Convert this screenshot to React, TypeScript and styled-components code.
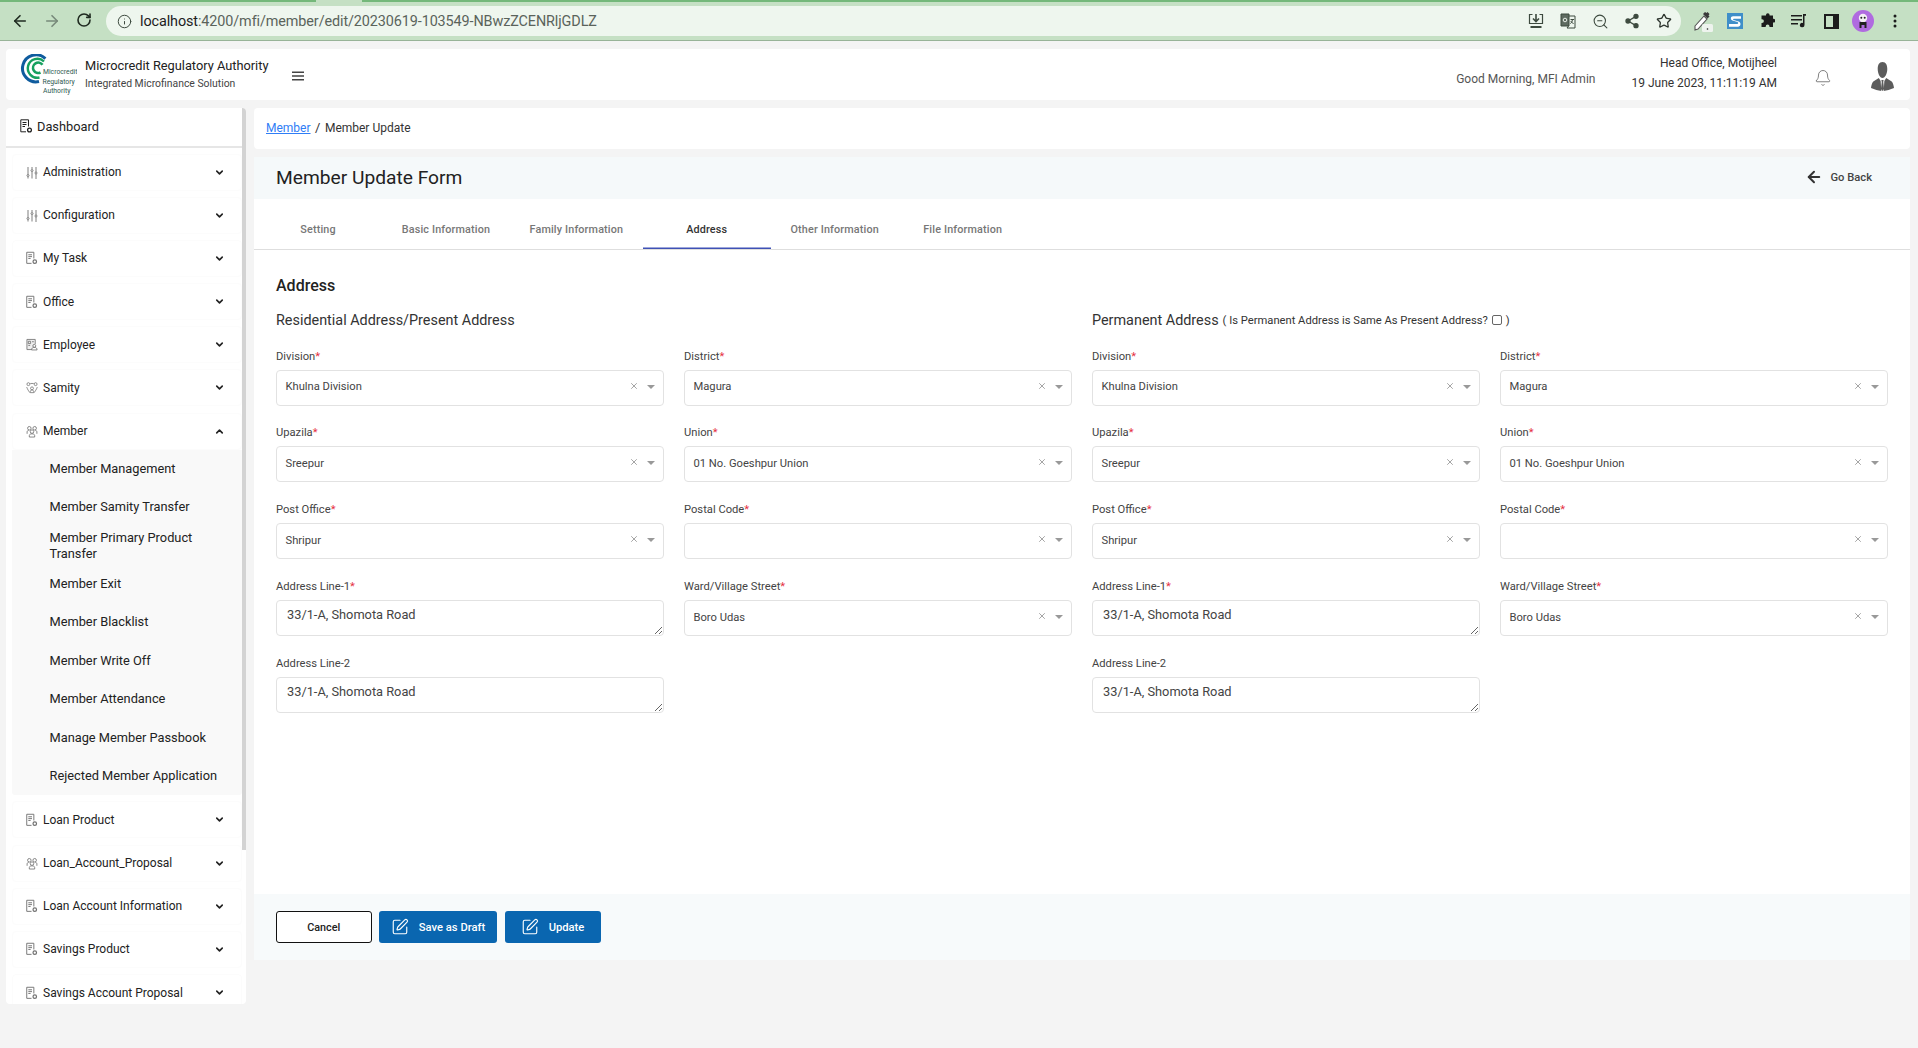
import React from "react";
import styled, { createGlobalStyle } from "styled-components";
import { ArrowLeft, ArrowRight, RotateCw, Info, ZoomOut, Share2, Star, SquarePen, Bell, ChevronDown, ChevronUp, X } from "lucide-react";

const Global = createGlobalStyle`
  html, body { margin: 0; padding: 0; background: #f4f4f4; height: 1048px; overflow: hidden; }
  * { box-sizing: border-box; }
  body { font-family: Roboto, "Liberation Sans", sans-serif; color: #222; }
`;

const TabStrip = styled.div`display: flex; height: 2px; background: #c5e0c4;`;
const TabSeg = styled.div<{ $w?: number }>`
  background: #74b87a; height: 2px;
  ${(p) => (p.$w ? `width: ${p.$w}px;` : "flex: 1;")}
  ${(p) => (p.$w ? "margin-right: 46px;" : "")}
`;
const Toolbar = styled.div`
  height: 39px; background: #c5e0c4; border-bottom: 1px solid #98b398;
  display: flex; align-items: center; padding: 0; color: #222;
`;
const NavBtn = styled.span<{ $dim?: boolean }>`
  width: 32px; display: flex; justify-content: center; color: ${(p) => (p.$dim ? "#77897a" : "#1f2a20")};
`;
const NavGroup = styled.div`display: flex; margin: 0 6px 0 4px;`;
const Omnibox = styled.div`
  width: 1575px; height: 30px; background: #eef6ee; border-radius: 15px;
  display: flex; align-items: center; padding: 0 1px 0 11px; font-size: 14.4px; color: #5a635b;
`;
const Url = styled.span`margin-left: 8px; flex: 1; letter-spacing: -0.1px;`;
const Host = styled.b`font-weight: 400; color: #1c211d;`;
const OmniIcon = styled.span`width: 32px; display: flex; justify-content: center; color: #3d4a3f;`;
const ExtGroup = styled.div`display: flex; margin-left: 6px;`;
const ExtIcon = styled.span`width: 32px; display: flex; justify-content: center; align-items: center; color: #1f1f1f;`;

const Page = styled.div`padding: 8px 8px 0 6px; display: flex; flex-direction: column; gap: 8px;`;
const Header = styled.header`
  height: 51px; background: #fff; border-radius: 4px; display: flex; align-items: center; padding: 0 16px 0 14px;
`;
const Brand = styled.div`margin-left: 8px; display: flex; flex-direction: column;`;
const BrandName = styled.div`font-size: 12.8px; line-height: 16px; color: #222; margin-top: -1px;`;
const BrandSub = styled.div`font-size: 10.4px; line-height: 13px; margin-top: 3px; color: #444;`;
const Burger = styled.span`margin-left: 24px; display: flex; color: #444; padding-top: 2px;`;
const Greeting = styled.div`margin-left: auto; font-size: 12px; color: #555; margin-right: 36px; padding-top: 8px;`;
const OfficeInfo = styled.div`text-align: right; font-size: 12px; color: #333; line-height: 20px; padding-bottom: 3px;`;
const BellBox = styled.span`margin-left: 37px; display: flex; color: #666; padding-top: 6px;`;
const Avatar = styled.span`margin-left: 39px; display: flex; padding-top: 4px;`;

const Content = styled.div`display: flex; gap: 8px; align-items: flex-start;`;
const Sidebar = styled.aside`
  width: 240px; height: 896px; background: #fff; border-radius: 4px; overflow: hidden; display: flex;
`;
const NavColumn = styled.nav`width: 236px; flex: none;`;
const Thumb = styled.div`width: 4px; height: 742px; background: #d3d3d3; flex: none;`;
const DashRow = styled.div`
  height: 40px; display: flex; align-items: center; padding: 0 0 2px 14px; border-bottom: 2px solid #e6e6e6;
  font-size: 12.8px; gap: 4px; color: #222;
`;
const NavList = styled.div`padding: 5.5px 0 0 6px; display: flex; flex-direction: column; gap: 6.2px;`;
const NavItem = styled.div``;
const NavHead = styled.div`
  height: 37px; border: 1px solid #fcfcfc; border-radius: 4px; display: flex; align-items: center;
  padding: 0 16px 0 13px; font-size: 12px; color: #222;
`;
const NavIcon = styled.span`width: 12px; margin-right: 5px; display: flex; color: #707070;`;
const NavLabel = styled.span`flex: 1;`;
const SubList = styled.div`background: #f9f9f9; border-radius: 0 0 3px 3px;`;
const SubItem = styled.div`
  height: 38.4px; display: flex; align-items: center; padding: 0 20px 0 37.5px; font-size: 12.8px; line-height: 16px; color: #222;
`;

const Main = styled.main`flex: 1; display: flex; flex-direction: column; gap: 8px; min-width: 0;`;
const Breadcrumb = styled.div`
  height: 41px; background: #fff; border-radius: 4px; display: flex; align-items: center; padding: 0 0 2px 12px; font-size: 12px; color: #333;
`;
const CrumbLink = styled.a`color: #2f7df6; text-decoration: underline;`;
const CrumbSep = styled.span`margin: 0 4.5px; font-size: 13px;`;
const Card = styled.section`height: 803px; background: #fff; display: flex; flex-direction: column;`;
const CardHead = styled.div`
  height: 42px; background: #f5f9fa; display: flex; align-items: center; justify-content: space-between; padding: 0 38px 0 22px;
`;
const CardTitle = styled.h1`margin: 0 0 2px; font-weight: 400; font-size: 19.2px; color: #222;`;
const GoBack = styled.span`display: flex; align-items: center; gap: 7px; font-size: 11.2px; font-weight: 500; color: #444; padding-bottom: 2px;`;
const Tabs = styled.div`height: 51px; display: flex; border-bottom: 1px solid #dedede;`;
const Tab = styled.div<{ $active?: boolean }>`
  min-width: 128px; padding: 11px 19.5px 0; display: flex; align-items: center; justify-content: center;
  font-size: 10.8px; font-weight: 500; letter-spacing: 0.15px; color: ${(p) => (p.$active ? "#333" : "#777")};
  ${(p) => (p.$active ? "box-shadow: inset 0 -1.5px 0 #3f51b5;" : "")}
`;
const FormBody = styled.div`flex: 1; padding: 26px 22px 0; `;
const FormTitle = styled.h2`margin: 0 0 14px; font-size: 16px; line-height: 20px; font-weight: 500; color: #222;`;
const Sections = styled.div`display: grid; grid-template-columns: 1fr 1fr; gap: 20px;`;
const SectionHead = styled.div`display: flex; align-items: center; height: 20px; font-size: 14.4px; color: #333; margin-bottom: 19px;`;
const SameNote = styled.span`font-size: 11.2px; color: #333; margin-left: 4px; display: flex; align-items: center; gap: 4px;`;
const Check = styled.span`width: 10px; height: 10px; border: 1px solid #666; border-radius: 2px; background: #fff;`;
const FieldGrid = styled.div`display: grid; grid-template-columns: 1fr 1fr; column-gap: 20px; row-gap: 20.4px;`;
const Field = styled.div`display: flex; flex-direction: column; gap: 6px;`;
const Label = styled.label`font-size: 11.2px; line-height: 14px; color: #444; padding-top: 0.5px;`;
const Req = styled.span`color: #e5303f;`;
const SelectBox = styled.div`
  height: 36px; border: 1px solid #e2e2e2; border-bottom-width: 1.5px; border-radius: 4px; display: flex; align-items: center; padding: 0 8px 2px 8.5px;
  font-size: 11.2px; color: #444;
`;
const SelectValue = styled.span`flex: 1;`;
const ClearIcon = styled.span`display: flex; color: #777; margin: 0 8px 2px 0;`;
const Caret = styled.span`
  width: 0; height: 0; border-left: 4px solid transparent; border-right: 4px solid transparent; border-top: 4px solid #999; margin-right: 0;
`;
const Area = styled.textarea`
  height: 36px; width: 100%; border: 1px solid #e2e2e2; border-bottom-width: 1.5px; border-radius: 4px; padding: 6px 10px;
  font-family: Roboto, sans-serif; font-size: 12.8px; line-height: 15px; color: #444; outline: none; display: block;
`;
const Footer = styled.div`
  height: 66px; background: #f7fafb; display: flex; align-items: center; padding: 0 22px; gap: 7.5px; 
`;
const OutlineBtn = styled.button`
  width: 95.5px; height: 32.5px; border: 1px solid #111; border-radius: 3px; background: #fff; font-family: Roboto, sans-serif;
  font-size: 10.8px; font-weight: 500; color: #222; padding: 0;
`;
const PrimaryBtn = styled.button<{ $w: number }>`
  width: ${(p) => p.$w}px; height: 32.5px; border: 0; border-radius: 3px; background: #0a66b0; color: #fff; font-family: Roboto, sans-serif;
  font-size: 11.2px; font-weight: 500; display: flex; align-items: center; justify-content: center; gap: 10px; padding: 0;
`;

const DocIcon = () => (
  <svg width="13" height="14" viewBox="0 0 13 14" fill="none" stroke="currentColor" strokeWidth="1">
    <path d="M8.500 7.500V.8H.8v12H6" /><path d="M2.500 3.500h4M2.500 5.500h4M2.500 7.500h2.500" />
    <circle cx="9.500" cy="11" r="1.900" strokeWidth="1.300" />
  </svg>
);
const SlidersIcon = () => (
  <svg width="12" height="13" viewBox="0 0 12 13" fill="none" stroke="currentColor" strokeWidth="0.9">
    <path d="M2 1v7.500M2 10.500v2M6 1v2M6 5.500v7M10 1v5M10 8v5" />
    <circle cx="2" cy="9.500" r="1" /><circle cx="6" cy="4.500" r="1" /><circle cx="10" cy="7" r="1" />
  </svg>
);
const PeopleIcon = () => (
  <svg width="13" height="13" viewBox="0 0 13 13" fill="none" stroke="currentColor" strokeWidth="0.9">
    <circle cx="3.600" cy="3" r="1.900" /><circle cx="9.400" cy="3" r="1.900" /><circle cx="6.500" cy="6.600" r="1.900" />
    <path d="M1.200 9V7c0-1 .8-1.800 1.800-1.800M11.800 9V7c0-1-.8-1.800-1.800-1.800M3.600 12.500V11c0-1 .9-1.900 1.900-1.900h2c1 0 1.900.9 1.900 1.900v1.500z" />
  </svg>
);
const EmployeeIcon = () => (
  <svg width="13" height="13" viewBox="0 0 13 13" fill="none" stroke="currentColor" strokeWidth="0.9">
    <path d="M6 12H1V1h9v5" fill="#eee" /><path d="M2.500 3h2.500v2.500H2.500zM6.500 3.500h2M2.500 7.500h2" />
    <circle cx="9" cy="8" r="1.600" /><path d="M6 12.400c0-2 1.300-2.800 3-2.800s3 .8 3 2.800z" />
  </svg>
);
const SamityIcon = () => (
  <svg width="14" height="13" viewBox="0 0 14 13" fill="none" stroke="currentColor" strokeWidth="0.9">
    <circle cx="2.800" cy="2.600" r="1.700" /><circle cx="11.200" cy="2.600" r="1.700" /><circle cx="7" cy="7.500" r="1.700" />
    <path d="M.8 6c1.200 3 2.200 4.500 3.700 6.500M13.200 6c-1.200 3-2.200 4.500-3.700 6.500M5 1.800h4M5 12.500v-1.500c0-1 1-1.400 2-1.400s2 .4 2 1.400v1.500z" />
  </svg>
);
const Logo = () => (
  <svg width="57" height="41" viewBox="0 0 57 41" fill="none">
    <path d="M25.400 4.600A13.500 13.500 0 1 0 19 27.500" stroke="#0f5c9e" strokeWidth="3" />
    <path d="M24 7.500A9.500 9.500 0 1 0 19.500 23.500" stroke="#16a05f" strokeWidth="2.400" />
    <path d="M22.500 10.800A5.200 5.200 0 1 0 20.500 18.500" stroke="#16a05f" strokeWidth="2.600" />
    <g fill="#2f5a52" fontFamily="Roboto, sans-serif" fontSize="6.800">
      <text x="23" y="19.500">Microcredit</text>
      <text x="22.500" y="29.500">Regulatory</text>
      <text x="23" y="38.500">Authority</text>
    </g>
  </svg>
);
const UserSilhouette = () => (
  <svg width="23" height="29" viewBox="0 0 25 29" preserveAspectRatio="none" fill="#5c5c5c">
    <path d="M12.500 0c3.800 0 5.200 3 5.200 7 0 4.500-2.300 9-5.200 9s-5.200-4.500-5.200-9c0-4 1.400-7 5.200-7z" />
    <path d="M8.500 16 2.500 19.500C1 20.500.3 24 0 26c4 1.500 8 2.500 11.200 3L10.500 19zM16.500 16l6 3.500c1.500 1 2.200 4.500 2.500 6.500-4 1.500-8 2.500-11.200 3l.7-10z" />
    <path d="M11.300 18h2.400l-.4 2 .9 7-1.700 2-1.700-2 .9-7z" />
  </svg>
);
const SidePanel = () => (
  <svg width="15" height="15" viewBox="0 0 15 15"><path fill="#1c1c1c" fillRule="evenodd" d="M0 0h15v15H0zM2 2v11h7V2z" /></svg>
);
const Media = () => (
  <svg width="16" height="14" viewBox="0 0 16 14" fill="#1c1c1c">
    <path d="M0 1h11v1.500H0zM0 5h11v1.500H0zM0 9h7v1.500H0z" />
    <path d="M12 0h3v1.800h-1.500V11a2.300 2.300 0 1 1-1.500-2.100z" />
  </svg>
);
const Puzzle = () => (
  <svg width="16" height="16" viewBox="0 0 16 16" fill="#1c1c1c">
    <path d="M4 2.500h3V2a1.800 1.800 0 0 1 3.600 0v.5h3.400v3.300h.4a1.900 1.900 0 0 1 0 3.800H14V14H10.500v-.6a1.900 1.900 0 0 0-3.800 0v.6H2.500v-4H3a1.900 1.900 0 0 0 0-3.800h-.5V2.500z" />
  </svg>
);
const Dropper = () => (
  <svg width="20" height="22" viewBox="0 0 20 22">
    <path d="M2 16 11 6l3 3-9 10-3 1z" fill="#fff" stroke="#555" strokeWidth="1.100" />
    <path d="m10 4 2-2 1.500 1 1-1 2 2-1 1.500 1 1-2 2z" fill="#3a3a3a" />
    <rect x="9" y="14" width="11" height="8" rx="1.500" fill="#eef3ee" />
    <circle cx="14.500" cy="19" r=".8" fill="#222" />
  </svg>
);
const SExt = () => (
  <svg width="16" height="16" viewBox="0 0 16 16">
    <rect width="16" height="16" fill="#3f8fc9" />
    <path d="M14 3.200H6C3.500 3.200 3 6.600 5.500 7.500l5 1.500c1.200.4.800 2-.3 2H2v2.800h9c3 0 3.500-4.300.6-5.200l-5-1.500c-.8-.3-.6-1.300.2-1.300H14z" fill="#fff" />
  </svg>
);
const Profile = () => (
  <svg width="22" height="22" viewBox="0 0 22 22">
    <circle cx="11" cy="11" r="11" fill="#b06be0" />
    <circle cx="11" cy="8" r="4.200" fill="#f4f0f4" />
    <circle cx="9.300" cy="7.800" r="1" fill="#222" /><circle cx="12.700" cy="7.800" r="1" fill="#222" />
    <path d="M7.500 12h7v6h-2v-3h-3v3h-2z" fill="#222" />
  </svg>
);
const Dots = () => (
  <svg width="4" height="14" viewBox="0 0 4 14" fill="#1c1c1c"><circle cx="2" cy="2" r="1.500" /><circle cx="2" cy="7" r="1.500" /><circle cx="2" cy="12" r="1.500" /></svg>
);
const SaveIcon = () => (
  <svg width="16" height="16" viewBox="0 0 16 16" fill="none" stroke="#3d4a3f" strokeWidth="1.200">
    <path d="M4.500 1.500h-3v9h13v-9h-3" /><path d="M2.500 14h11" strokeWidth="2" /><path d="M8 1v7M5 5.500 8 8.500l3-3" strokeWidth="1.600" />
  </svg>
);
const Translate = () => (
  <svg width="16" height="16" viewBox="0 0 16 16" fill="none" stroke="#3d4a3f" strokeWidth="1">
    <path d="M1 1h8v12H1z" fill="#5f6b61" /><path d="M9 3h6v12H7l1.500-2" />
    <path d="M10.500 6.500h3.500M12.300 6v1c0 2-1 3-2 3.500M10.800 8c.5 1 1.300 2 2.800 2.500" />
    <circle cx="5" cy="7" r="1.800" stroke="#e8efe8" />
  </svg>
);
const MenuLines = () => (
  <svg width="12" height="10" viewBox="0 0 12 10" fill="currentColor"><path d="M0 .5h12v1.600H0zM0 4.200h12v1.600H0zM0 7.900h12v1.600H0z" /></svg>
);

type Kind = "doc" | "sliders" | "people" | "employee" | "samity";
const icons: Record<Kind, React.ReactNode> = {
  doc: <DocIcon />, sliders: <SlidersIcon />, people: <PeopleIcon />, employee: <EmployeeIcon />, samity: <SamityIcon />,
};

const before: [string, Kind][] = [
  ["Administration", "sliders"], ["Configuration", "sliders"], ["My Task", "doc"], ["Office", "doc"], ["Employee", "employee"], ["Samity", "samity"],
];
const after: [string, Kind][] = [
  ["Loan Product", "doc"], ["Loan_Account_Proposal", "people"], ["Loan Account Information", "doc"], ["Savings Product", "doc"], ["Savings Account Proposal", "doc"],
];
const subs = [
  "Member Management", "Member Samity Transfer", "Member Primary Product Transfer", "Member Exit", "Member Blacklist",
  "Member Write Off", "Member Attendance", "Manage Member Passbook", "Rejected Member Application",
];
const tabs = ["Setting", "Basic Information", "Family Information", "Address", "Other Information", "File Information"];

const Select = ({ label, value }: { label: string; value?: string }) => (
  <Field>
    <Label>{label}<Req>*</Req></Label>
    <SelectBox>
      <SelectValue>{value}</SelectValue>
      <ClearIcon><X size={10} strokeWidth={1.600} /></ClearIcon>
      <Caret />
    </SelectBox>
  </Field>
);
const TextBox = ({ label, req, full }: { label: string; req?: boolean; full?: boolean }) => (
  <Field style={full ? { gridColumn: "1 / 2" } : undefined}>
    <Label>{label}{req && <Req>*</Req>}</Label>
    <Area readOnly defaultValue="33/1-A, Shomota Road" />
  </Field>
);
const AddressFields = () => (
  <FieldGrid>
    <Select label="Division" value="Khulna Division" />
    <Select label="District" value="Magura" />
    <Select label="Upazila" value="Sreepur" />
    <Select label="Union" value="01 No. Goeshpur Union" />
    <Select label="Post Office" value="Shripur" />
    <Select label="Postal Code" />
    <TextBox label="Address Line-1" req />
    <Select label="Ward/Village Street" value="Boro Udas" />
    <TextBox label="Address Line-2" full />
  </FieldGrid>
);
const NavRow = ({ label, kind, open }: { label: string; kind: Kind; open?: boolean }) => (
  <NavHead>
    <NavIcon>{icons[kind]}</NavIcon>
    <NavLabel>{label}</NavLabel>
    {open ? <ChevronUp size={11} strokeWidth={3.500} color="#222" /> : <ChevronDown size={11} strokeWidth={3.500} color="#222" />}
  </NavHead>
);

export default function App() {
  return (
    <>
      <Global />
      <TabStrip><TabSeg $w={316} /><TabSeg /></TabStrip>
      <Toolbar>
        <NavGroup>
          <NavBtn><ArrowLeft size={18} strokeWidth={2.200} /></NavBtn>
          <NavBtn $dim><ArrowRight size={18} strokeWidth={2.200} /></NavBtn>
          <NavBtn><RotateCw size={16} strokeWidth={2.400} /></NavBtn>
        </NavGroup>
        <Omnibox>
          <Info size={15} strokeWidth={1.600} color="#3d4a3f" />
          <Url><Host>localhost</Host>:4200/mfi/member/edit/20230619-103549-NBwzZCENRljGDLZ</Url>
          <OmniIcon><SaveIcon /></OmniIcon>
          <OmniIcon><Translate /></OmniIcon>
          <OmniIcon><ZoomOut size={17} strokeWidth={1.500} /></OmniIcon>
          <OmniIcon><Share2 size={16} strokeWidth={2} fill="#3d4a3f" /></OmniIcon>
          <OmniIcon><Star size={16} strokeWidth={1.900} color="#2c342d" /></OmniIcon>
        </Omnibox>
        <ExtGroup>
          <ExtIcon><Dropper /></ExtIcon>
          <ExtIcon><SExt /></ExtIcon>
          <ExtIcon><Puzzle /></ExtIcon>
          <ExtIcon><Media /></ExtIcon>
          <ExtIcon><SidePanel /></ExtIcon>
          <ExtIcon><Profile /></ExtIcon>
          <ExtIcon><Dots /></ExtIcon>
        </ExtGroup>
      </Toolbar>
      <Page>
        <Header>
          <Logo />
          <Brand>
            <BrandName>Microcredit Regulatory Authority</BrandName>
            <BrandSub>Integrated Microfinance Solution</BrandSub>
          </Brand>
          <Burger><MenuLines /></Burger>
          <Greeting>Good Morning, MFI Admin</Greeting>
          <OfficeInfo>Head Office, Motijheel<br />19 June 2023, 11:11:19 AM</OfficeInfo>
          <BellBox><Bell size={18} strokeWidth={1.100} /></BellBox>
          <Avatar><UserSilhouette /></Avatar>
        </Header>
        <Content>
          <Sidebar>
            <NavColumn>
              <DashRow><DocIcon />Dashboard</DashRow>
              <NavList>
                {before.map(([l, k]) => <NavItem key={l}><NavRow label={l} kind={k} /></NavItem>)}
                <NavItem>
                  <NavRow label="Member" kind="people" open />
                  <SubList>{subs.map((s) => <SubItem key={s}>{s}</SubItem>)}</SubList>
                </NavItem>
                {after.map(([l, k]) => <NavItem key={l}><NavRow label={l} kind={k} /></NavItem>)}
              </NavList>
            </NavColumn>
            <Thumb />
          </Sidebar>
          <Main>
            <Breadcrumb>
              <CrumbLink href="#">Member</CrumbLink><CrumbSep>/</CrumbSep>Member Update
            </Breadcrumb>
            <Card>
              <CardHead>
                <CardTitle>Member Update Form</CardTitle>
                <GoBack><ArrowLeft size={18} strokeWidth={2.600} color="#333" />Go Back</GoBack>
              </CardHead>
              <Tabs>
                {tabs.map((t) => <Tab key={t} $active={t === "Address"}>{t}</Tab>)}
              </Tabs>
              <FormBody>
                <FormTitle>Address</FormTitle>
                <Sections>
                  <div>
                    <SectionHead>Residential Address/Present Address</SectionHead>
                    <AddressFields />
                  </div>
                  <div>
                    <SectionHead>
                      Permanent Address
                      <SameNote>( Is Permanent Address is Same As Present Address? <Check /> )</SameNote>
                    </SectionHead>
                    <AddressFields />
                  </div>
                </Sections>
              </FormBody>
              <Footer>
                <OutlineBtn>Cancel</OutlineBtn>
                <PrimaryBtn $w={118}><SquarePen size={18} strokeWidth={1.500} />Save as Draft</PrimaryBtn>
                <PrimaryBtn $w={96}><SquarePen size={18} strokeWidth={1.500} />Update</PrimaryBtn>
              </Footer>
            </Card>
          </Main>
        </Content>
      </Page>
    </>
  );
}
